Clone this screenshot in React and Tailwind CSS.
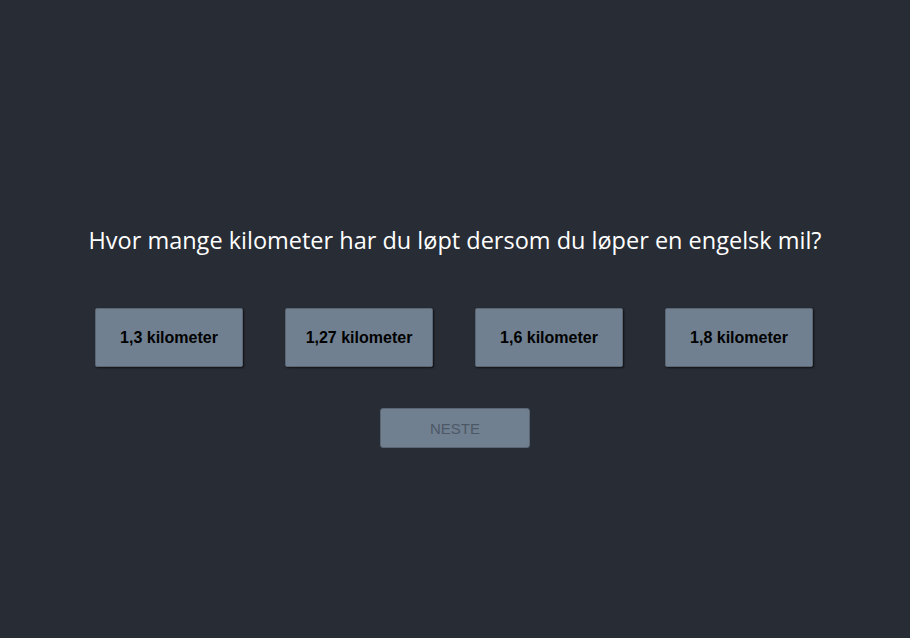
export default function App() {
  const opts = ["1,3 kilometer", "1,27 kilometer", "1,6 kilometer", "1,8 kilometer"];
  return (
    <div className="w-full min-h-[638px] bg-[#282c34] flex flex-col items-center pt-[224px]">
      <h1 className="text-white text-[23.5px] leading-[32px] font-normal font-['Open_Sans',sans-serif]">
        Hvor mange kilometer har du løpt dersom du løper en engelsk mil?
      </h1>
      <div className="flex gap-[42px] mt-[52px] pr-[2px]">
        {opts.map((o) => (
          <button
            key={o}
            className="w-[148px] h-[59px] pt-[1px] bg-[#708090] border border-[#5b6675] rounded-[2px] shadow-[1px_1px_2px_rgba(0,0,0,0.6)] text-black font-bold text-[16px] font-['Liberation_Sans',Arial,sans-serif]"
          >
            {o}
          </button>
        ))}
      </div>
      <button className="mt-[41px] w-[150px] h-[40px] pt-[2px] bg-[#708090] border border-[#5b6675] rounded-[3px] text-[#4d5866] text-[15px] font-['Liberation_Sans',Arial,sans-serif]">
        NESTE
      </button>
    </div>
  );
}
